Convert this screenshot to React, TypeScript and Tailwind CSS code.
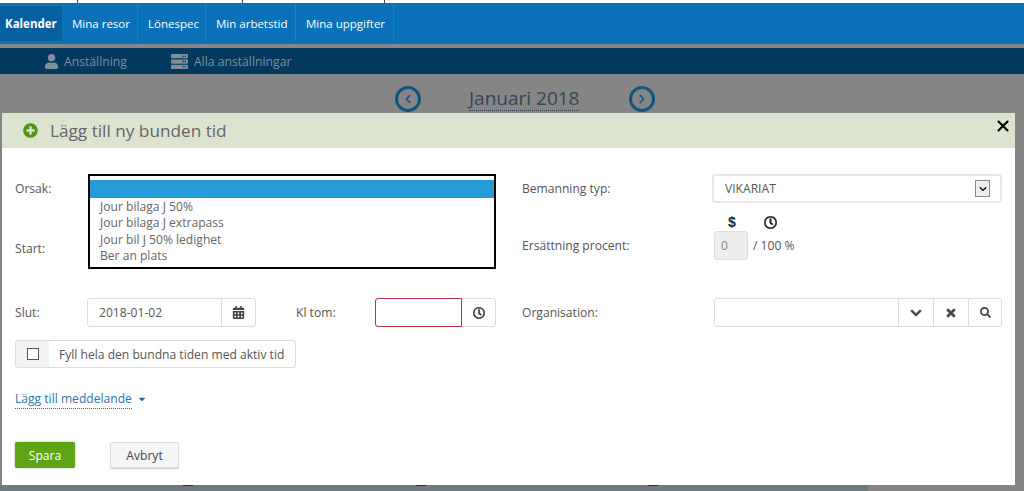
import React from "react";
import {
  FaCalendarAlt,
  FaCaretDown,
  FaChevronDown,
  FaChevronLeft,
  FaChevronRight,
  FaPlusCircle,
  FaRegClock,
  FaSearch,
  FaServer,
  FaTimes,
  FaUser,
} from "react-icons/fa";
import { X } from "lucide-react";

const tabs = [
  { label: "Mina resor", width: "w-[76px]" },
  { label: "Lönespec", width: "w-[68px]" },
  { label: "Min arbetstid", width: "w-[90px]" },
  { label: "Mina uppgifter", width: "w-[98px]" },
];

const reasons = ["Jour bilaga J 50%", "Jour bilaga J extrapass", "Jour bil J 50% ledighet", "Ber an plats"];

export default function App() {
  return (
    <div className="relative flex h-[491px] w-[1024px] flex-col overflow-hidden bg-[#858585] font-['Open_Sans',sans-serif] text-[12.1px] leading-[17px] text-[#555]">
      {/* Top nav */}
      <div className="flex h-[3px] bg-white">
        <span className="ml-[77px] w-px bg-[#444]" />
        <span className="ml-[164px] w-px bg-[#444]" />
        <span className="ml-[141px] w-px bg-[#444]" />
      </div>
      <div className="flex h-[41px] bg-[#0a72b8] pb-[3px] text-[11.5px] text-white">
        <div className="mt-[3px] flex w-[62px] items-center bg-[#06609f] pl-[5px] font-bold">Kalender</div>
        {tabs.map((tab) => (
          <div key={tab.label} className={`flex items-center border-r border-[#1f7fc0] pt-[3px] pl-[10px] ${tab.width}`}>
            {tab.label}
          </div>
        ))}
      </div>
      <div className="h-[4px] bg-[#868686]" />

      {/* Sub nav */}
      <div className="flex h-[26px] items-center bg-[#04395f] pl-[44px] text-[#7e8e9b]">
        <FaUser className="h-[15px] w-[15px]" />
        <span className="ml-[5px] text-[12.2px]">Anställning</span>
        <FaServer className="ml-[43px] h-[17px] w-[19px]" />
        <span className="ml-[5px] text-[12.2px]">Alla anställningar</span>
      </div>

      {/* Month header, mostly behind the dialog */}
      <div className="flex items-start pt-[12px] pl-[395px]">
        <div className="flex h-[26px] w-[26px] items-center justify-center rounded-full border-[3px] border-[#10577f] text-[#10577f]">
          <FaChevronLeft className="h-[10px] w-[10px]" />
        </div>
        <div className="ml-[48px] border-b border-dotted border-[#2b3f52] text-[19px] leading-[24px] text-[#33475a]">Januari 2018</div>
        <div className="ml-[50px] flex h-[26px] w-[26px] items-center justify-center rounded-full border-[3px] border-[#10577f] text-[#10577f]">
          <FaChevronRight className="h-[10px] w-[10px]" />
        </div>
      </div>

      {/* Page strip below the dialog */}
      <div className="absolute bottom-0 left-0 flex h-[6px] w-[868px] bg-[#6e7a80]">
        <span className="ml-[183px] h-px w-[10px] bg-[#333]" />
        <span className="ml-[223px] h-px w-[10px] bg-[#333]" />
        <span className="ml-[222px] h-px w-[10px] bg-[#333]" />
      </div>

      {/* Dialog */}
      <div className="absolute top-[113px] left-[2px] h-[372px] w-[1013px] bg-white">
        <div className="flex h-[35px] items-center bg-[#dce4d0] pl-[21px] text-[#666]">
          <FaPlusCircle className="h-[15px] w-[15px] text-[#4f9412]" />
          <span className="ml-[12px] text-[17.2px]">Lägg till ny bunden tid</span>
        </div>
        <X className="absolute top-[4px] right-[3px] h-[18px] w-[18px] text-black" strokeWidth={2.8} />

        <div className="flex pt-[26px] pl-[13px]">
          {/* Left column */}
          <div className="relative w-[481px]">
            <div className="flex h-[29px] items-center">Orsak:</div>
            <div className="mt-[31px] flex h-[29px] items-center">Start:</div>
            <div className="mt-[35px] flex h-[29px] items-center">
              <span className="w-[72px]">Slut:</span>
              <div className="flex h-[29px] w-[169px] rounded-[3px] border border-[#ddd]">
                <span className="flex flex-1 items-center border-r border-[#ddd] pl-[11px]">2018-01-02</span>
                <span className="flex w-[33px] items-center justify-center text-[#444]">
                  <FaCalendarAlt className="h-[13px] w-[13px]" />
                </span>
              </div>
              <span className="ml-[40px] w-[79px]">Kl tom:</span>
              <div className="flex h-[29px] w-[121px] rounded-[3px] border border-[#ddd]">
                <span className="-my-px -ml-px w-[87px] rounded-l-[3px] border border-[#b5394a]" />
                <span className="flex flex-1 items-center justify-center text-[#333]">
                  <FaRegClock className="h-[12px] w-[12px] stroke-current stroke-[20]" />
                </span>
              </div>
            </div>
            <div className="mt-[13px] flex h-[28px] w-[281px] rounded-[3px] border border-[#ddd]">
              <span className="flex w-[33px] items-center justify-center rounded-l-[3px] bg-[#f2f2f2]">
                <span className="h-[12px] w-[12px] border border-[#555] bg-white" />
              </span>
              <span className="flex items-center pl-[10px]">Fyll hela den bundna tiden med aktiv tid</span>
            </div>
            <div className="mt-[20px] flex h-[22px] items-center">
              <span className="border-b border-dotted border-[#2a6fa8] leading-[18px] text-[#2f74a8]">Lägg till meddelande</span>
              <FaCaretDown className="ml-[5px] h-[10px] w-[10px] text-[#1f6ba5]" />
            </div>
            <div className="mt-[32px] flex items-center">
              <button className="h-[26px] w-[60px] rounded-[2px] bg-[#5fa414] text-white shadow-[0_0_2px_#8a8]">Spara</button>
              <button className="ml-[35px] h-[26px] w-[69px] rounded-[2px] border border-[#ddd] bg-[#f5f5f5] text-[#444] shadow-[0_1px_1px_#ccc]">Avbryt</button>
            </div>

            {/* Open list over the Orsak and Start rows */}
            <div className="absolute top-0 left-[73px] h-[95px] w-[408px] border-2 border-black bg-white pt-[4px] text-[#666]">
              <div className="h-[18px] bg-[#259cd9]" />
              <div className="pt-px pl-[10px] leading-[16.4px]">
                {reasons.map((reason) => (
                  <div key={reason}>{reason}</div>
                ))}
              </div>
            </div>
          </div>

          {/* Right column */}
          <div className="ml-[26px] w-[481px]">
            <div className="flex h-[29px] items-center">
              <span className="w-[190px]">Bemanning typ:</span>
              <div className="flex h-[29px] w-[290px] items-center justify-between rounded-[3px] border-2 border-[#e8e8e8] pr-[10px] pl-[11px]">
                <span>VIKARIAT</span>
                <span className="flex h-[17px] w-[15px] items-center justify-center border border-[#888] bg-[#eee] text-black">
                  <FaChevronDown className="h-[8px] w-[8px]" />
                </span>
              </div>
            </div>
            <div className="mt-[11px] flex h-[16px] items-center pl-[192px] text-[#222]">
              <span className="ml-[14px] w-[8px] font-['Liberation_Sans',sans-serif] text-[14px] font-bold">$</span>
              <FaRegClock className="ml-[28px] h-[13px] w-[13px] stroke-current stroke-[20]" />
            </div>
            <div className="mt-[1px] flex h-[29px] items-center">
              <span className="w-[192px]">Ersättning procent:</span>
              <span className="flex h-[29px] w-[34px] items-center rounded-[3px] border border-[#ddd] bg-[#eee] pl-[6px] text-[#888]">0</span>
              <span className="ml-[5px]">/ 100 %</span>
            </div>
            <div className="mt-[38px] flex h-[29px] items-center">
              <span className="w-[192px]">Organisation:</span>
              <div className="flex h-[29px] w-[288px] rounded-[3px] border border-[#ddd] text-[#444]">
                <span className="flex-1" />
                <span className="flex w-[35px] items-center justify-center border-l border-[#ddd]">
                  <FaChevronDown className="h-[12px] w-[12px] stroke-current stroke-[30]" />
                </span>
                <span className="flex w-[35px] items-center justify-center border-l border-[#ddd]">
                  <FaTimes className="h-[12px] w-[12px] stroke-current stroke-[30]" />
                </span>
                <span className="flex w-[33px] items-center justify-center border-l border-[#ddd]">
                  <FaSearch className="h-[11px] w-[11px]" />
                </span>
              </div>
            </div>
          </div>
        </div>
      </div>
    </div>
  );
}
